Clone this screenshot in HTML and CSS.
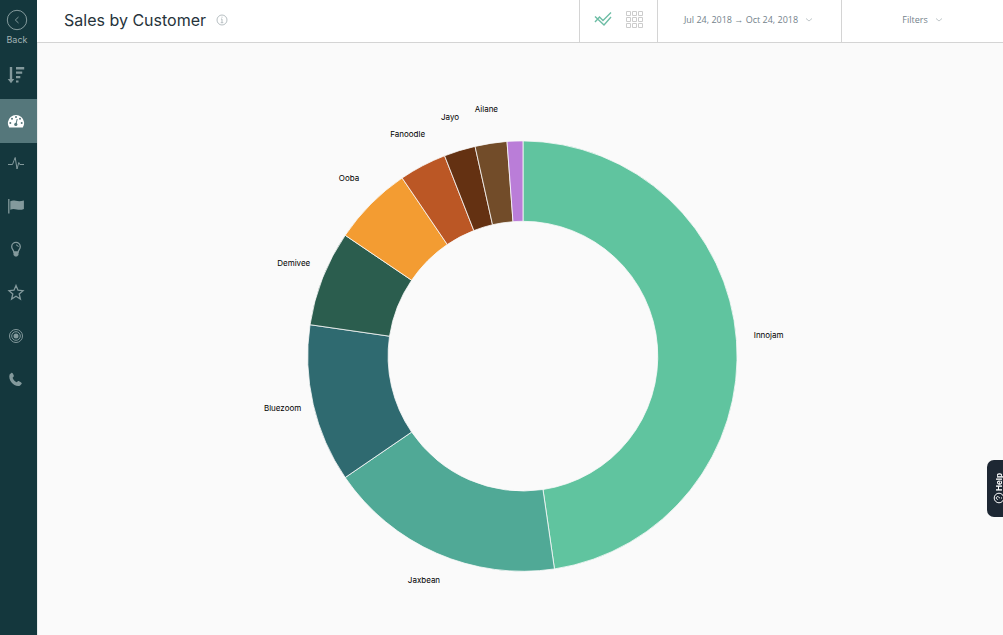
FILE: index.html
```html
<!DOCTYPE html>
<html lang="en">
<head>
<meta charset="utf-8">
<meta name="viewport" content="width=device-width, initial-scale=1">
<title>Sales by Customer</title>
<link rel="stylesheet" href="styles.css">
</head>
<body>
<div class="app">
  <nav class="sidebar" aria-label="Main">
    <a class="back" href="#back">
      <svg class="back-icon" viewBox="0 0 22 22" aria-hidden="true"><circle cx="11" cy="11" r="9.7"/><path d="M12.500 8 9.300 11l3.200 3"/></svg>
      <span>Back</span>
    </a>
    <a class="nav-item sort" href="#sort" aria-label="Rankings">
      <svg class="icon" viewBox="0 0 18 18" aria-hidden="true"><path class="line thick" d="M4 1v13"/><path class="fill" d="M.7 13h6.600L4 17.200zM9 1h8.200v2.400H9zM9 5.500h6.200v2.200H9zM9 10h4.300v2.200H9zM9 14.400h2.500v2.200H9z"/></svg>
    </a>
    <a class="nav-item active" href="#dashboard" aria-label="Dashboard" aria-current="page">
      <svg class="icon" viewBox="0 0 18 18" aria-hidden="true"><path class="fill" d="M2.200 15.500A8.100 8.100 0 1 1 15.800 15.500z"/><g class="dots"><circle cx="3.300" cy="11" r="1"/><circle cx="5" cy="6.800" r="1"/><circle cx="9" cy="5" r="1"/><circle cx="13" cy="6.800" r="1"/><circle cx="14.700" cy="11" r="1"/><circle cx="8.800" cy="12.400" r="1.600"/></g><path class="needle" d="M9 12.200 10.200 7"/></svg>
    </a>
    <a class="nav-item" href="#activity" aria-label="Activity">
      <svg class="icon" viewBox="0 0 18 18" aria-hidden="true"><path class="line" d="M1 9.500h4.500L7 5.500 8.200 2.500 10 14l1.800-6.500 1 2h4.200"/></svg>
    </a>
    <a class="nav-item" href="#goals" aria-label="Goals">
      <svg class="icon" viewBox="0 0 18 18" aria-hidden="true"><path class="line wide" d="M1.800 1v14.500"/><path class="fill" d="M3.300 3.200c4-2.300 6 1.300 13.600-.7v8.500c-5.700 2.500-8.700-1.500-13.600.7z"/></svg>
    </a>
    <a class="nav-item" href="#insights" aria-label="Insights">
      <svg class="icon" viewBox="0 0 18 18" aria-hidden="true"><path class="line wide" d="M6.800 11C6.800 8.800 4.700 8.200 4.700 5.700a4.300 4.300 0 0 1 8.600 0c0 2.500-2.100 3.100-2.100 5.300z"/><path class="line" d="M9 4c1.500 0 2.200.8 2.200 2"/><path class="fill" d="M6.500 11h5v3L10 15.500H8L6.500 14z"/></svg>
    </a>
    <a class="nav-item" href="#favorites" aria-label="Favorites">
      <svg class="icon" viewBox="0 0 18 18" aria-hidden="true"><path class="line wide" d="m9 1.500 2 4.700 5 .5-3.800 3.300 1.200 5L9 12.300 4.600 15l1.200-5L2 6.700l5-.5z"/></svg>
    </a>
    <a class="nav-item" href="#targets" aria-label="Targets">
      <svg class="icon" viewBox="0 0 18 18" aria-hidden="true"><circle class="line" cx="9" cy="9" r="6.500"/><circle class="line" cx="9" cy="9" r="4.300"/><circle class="fill" cx="9" cy="9" r="2.500"/></svg>
    </a>
    <a class="nav-item" href="#calls" aria-label="Calls">
      <svg class="icon" viewBox="0 0 18 18" aria-hidden="true"><path class="fill" d="M2.600 4.500 4.300 3c.8-.5 1.400 0 2.300 2.100.5 1.300.2 1.600-1 2.600.8 2 2.100 3.500 4.200 4.500 1.200-1.300 1.600-1.400 2.700-.8 2.300 1.100 2.700 1.700 2 2.700l-1.600 1.700C7.500 17.500.7 10.500 2.600 4.500z"/></svg>
    </a>
  </nav>

  <div class="page">
    <header class="topbar">
      <div class="heading">
        <h1>Sales by Customer</h1>
        <button class="info" type="button" aria-label="About this report">
          <svg viewBox="0 0 12 12" aria-hidden="true"><circle cx="6" cy="6" r="5"/><path d="M5 5h1v3.500M4.700 8.700h2.600M5.500 3.200h1"/></svg>
        </button>
      </div>
      <div class="views">
        <button class="view chart-view" type="button" aria-label="Chart view" aria-pressed="true">
          <svg viewBox="0 0 18 18" aria-hidden="true"><path d="M1 6.500l9 8.500 7-8M1 12l4.500-5L9 10.500 17 2.500"/></svg>
        </button>
        <button class="view grid-view" type="button" aria-label="Grid view" aria-pressed="false">
          <svg viewBox="0 0 18 18" aria-hidden="true"><path d="M1.500 1.500h4v4h-4zM7.500 1.500h4v4h-4zM13.500 1.500h4v4h-4zM1.500 7.500h4v4h-4zM7.500 7.500h4v4h-4zM13.500 7.500h4v4h-4zM1.500 13.500h4v4h-4zM7.500 13.500h4v4h-4zM13.500 13.500h4v4h-4z"/></svg>
        </button>
      </div>
      <button class="menu dates" type="button">
        <span>Jul 24, 2018 → Oct 24, 2018</span>
        <svg class="chevron" viewBox="0 0 8 6" aria-hidden="true"><path d="M1 1.500l3 2.500 3-2.500"/></svg>
      </button>
      <button class="menu filters" type="button">
        <span>Filters</span>
        <svg class="chevron" viewBox="0 0 8 6" aria-hidden="true"><path d="M1 1.500l3 2.500 3-2.500"/></svg>
      </button>
    </header>

    <main class="content">
      <svg class="chart" viewBox="0 0 966 592" role="img" aria-label="Sales by customer">
        <g transform="translate(485.500 313.500)">
          <g class="slices">
            <path class="innojam" d="M0-215.500A215.500 215.500 0 0 1 31.500 213L20 133.500A135 135 0 0 0 0-135z"/>
            <path class="jaxbean" d="M31.500 213A215.500 215.500 0 0 1-178 121.500L-111.500 76A135 135 0 0 0 20 133.500z"/>
            <path class="bluezoom" d="M-178 121.500A215.500 215.500 0 0 1-213.200-31.500L-133.600-20A135 135 0 0 0-111.500 76z"/>
            <path class="demivee" d="M-213.200-31.500A215.500 215.500 0 0 1-178-121L-111.500-76A135 135 0 0 0-133.600-20z"/>
            <path class="ooba" d="M-178-121A215.500 215.500 0 0 1-121-178.400L-75.800-111.800A135 135 0 0 0-111.500-76z"/>
            <path class="fanoodle" d="M-121-178.400A215.500 215.500 0 0 1-78.500-200.600L-49.200-125.700A135 135 0 0 0-75.800-111.800z"/>
            <path class="jayo" d="M-78.500-200.600A215.500 215.500 0 0 1-48-210L-30.500-131.600A135 135 0 0 0-49.200-125.700z"/>
            <path class="ailane" d="M-48-210A215.500 215.500 0 0 1-16-215L-10-134.600A135 135 0 0 0-30.500-131.600z"/>
            <path class="other" d="M-16-215A215.500 215.500 0 0 1 0-215.500V-135A135 135 0 0 0-10-134.600z"/>
          </g>
          <g class="labels">
            <text x="231" y="-18">Innojam</text>
            <text class="end" x="-83" y="227">Jaxbean</text>
            <text class="end" x="-222" y="55">Bluezoom</text>
            <text class="end" x="-213" y="-90">Demivee</text>
            <text class="end" x="-164" y="-175">Ooba</text>
            <text class="end" x="-98" y="-219">Fanoodle</text>
            <text class="end" x="-64" y="-236">Jayo</text>
            <text class="end" x="-25" y="-244">Ailane</text>
          </g>
        </g>
      </svg>
    </main>
  </div>

  <button class="help" type="button">
    <svg viewBox="0 0 12 12" aria-hidden="true"><circle cx="6" cy="6" r="4.800"/><path d="M4.500 4.800c0-2 3-2 3 0 0 1-1.500 1-1.500 2.200M6 8v1"/></svg>
    <span>Help</span>
  </button>
</div>
</body>
</html>
```
FILE: styles.css
```css
* { box-sizing: border-box; }

body {
  margin: 0;
  background: #fafafa;
  font-family: Inter, "Liberation Sans", sans-serif;
}

button {
  margin: 0;
  padding: 0;
  border: 0;
  background: none;
  color: inherit;
  font: inherit;
  cursor: pointer;
}

svg { display: block; fill: none; stroke: currentColor; }

.app { display: flex; min-height: 100vh; }

.sidebar {
  display: flex;
  flex-direction: column;
  flex: none;
  width: 37px;
  background: #14373d;
  color: #83999c;
}

.back {
  display: flex;
  flex-direction: column;
  align-items: center;
  gap: 4px;
  height: 54px;
  padding: 9px 3px 0 0;
  color: #a0b2b4;
  font-size: 9px;
  line-height: 10px;
  text-decoration: none;
}

.back-icon { width: 22px; height: 22px; stroke-width: 0.8; }

.nav-item {
  display: flex;
  align-items: center;
  justify-content: center;
  height: 43px;
  padding: 0 6px 1px 0;
  color: inherit;
}

.nav-item.sort { height: 45px; padding-bottom: 3px; }
.nav-item.active { height: 44px; background: #55777b; color: #fff; }

.icon { width: 18px; height: 18px; }
.icon .line { stroke-width: 1; }
.icon .wide { stroke-width: 1.3; }
.icon .thick { stroke-width: 2.4; }
.icon .fill { fill: currentColor; stroke: none; }
.icon .dots { fill: #55777b; stroke: none; }
.icon .needle { stroke: #55777b; }

.page { display: flex; flex: 1; flex-direction: column; min-width: 0; }

.topbar {
  display: flex;
  height: 43px;
  border-bottom: 1px solid #d4d4d4;
  background: #fff;
}

.heading {
  display: flex;
  flex: 1;
  align-items: center;
  gap: 10px;
  padding: 0 0 3px 27px;
}

h1 {
  margin: 0;
  color: #26333b;
  font-size: 16px;
  font-weight: 400;
  line-height: 24px;
  white-space: nowrap;
}

.info { color: #a5afb2; }
.info svg { width: 12px; height: 12px; stroke-width: 0.8; }

.views {
  display: flex;
  align-items: center;
  justify-content: center;
  gap: 13px;
  width: 78px;
  padding-bottom: 4px;
  border-left: 1px solid #d4d4d4;
}

.view svg { width: 18px; height: 18px; }
.chart-view { color: #6dbda5; }
.chart-view svg { stroke-width: 1.4; }
.grid-view { color: #ccc; }

.menu {
  display: flex;
  align-items: center;
  justify-content: center;
  gap: 7px;
  padding-bottom: 3px;
  border-left: 1px solid #d4d4d4;
  color: #74828b;
  font-family: "Open Sans", "Liberation Sans", sans-serif;
  font-size: 9px;
  line-height: 12px;
  white-space: nowrap;
}

.dates { width: 184px; padding-right: 2px; }
.filters { width: 162px; }
.chevron { width: 8px; height: 6px; stroke: #aeb8bb; stroke-width: 0.8; }

.content { flex: 1; border-left: 1px solid #e8ebeb; }

.chart { width: 100%; height: auto; }

.slices { stroke: #fafafa; stroke-width: 0.8; }
.innojam { fill: #60c49f; }
.jaxbean { fill: #50a996; }
.bluezoom { fill: #2f6a70; }
.demivee { fill: #2b5d4e; }
.ooba { fill: #f39c32; }
.fanoodle { fill: #bb5725; }
.jayo { fill: #643112; }
.ailane { fill: #724c29; }
.other { fill: #ba7dd8; }

.labels { fill: #000; stroke: none; font-size: 8px; }
.labels .end { text-anchor: end; }

.help {
  position: fixed;
  top: 460px;
  right: 0;
  display: flex;
  flex-direction: column-reverse;
  align-items: center;
  justify-content: center;
  gap: 2px;
  width: 16px;
  height: 57px;
  padding-left: 8px;
  border-radius: 7px 0 0 7px;
  background: #1d2733;
  color: #fff;
  font-size: 8px;
  font-weight: 700;
  line-height: 10px;
}

.help span { writing-mode: vertical-rl; rotate: 180deg; }
.help svg { flex: none; width: 12px; height: 12px; rotate: -90deg; }
```
